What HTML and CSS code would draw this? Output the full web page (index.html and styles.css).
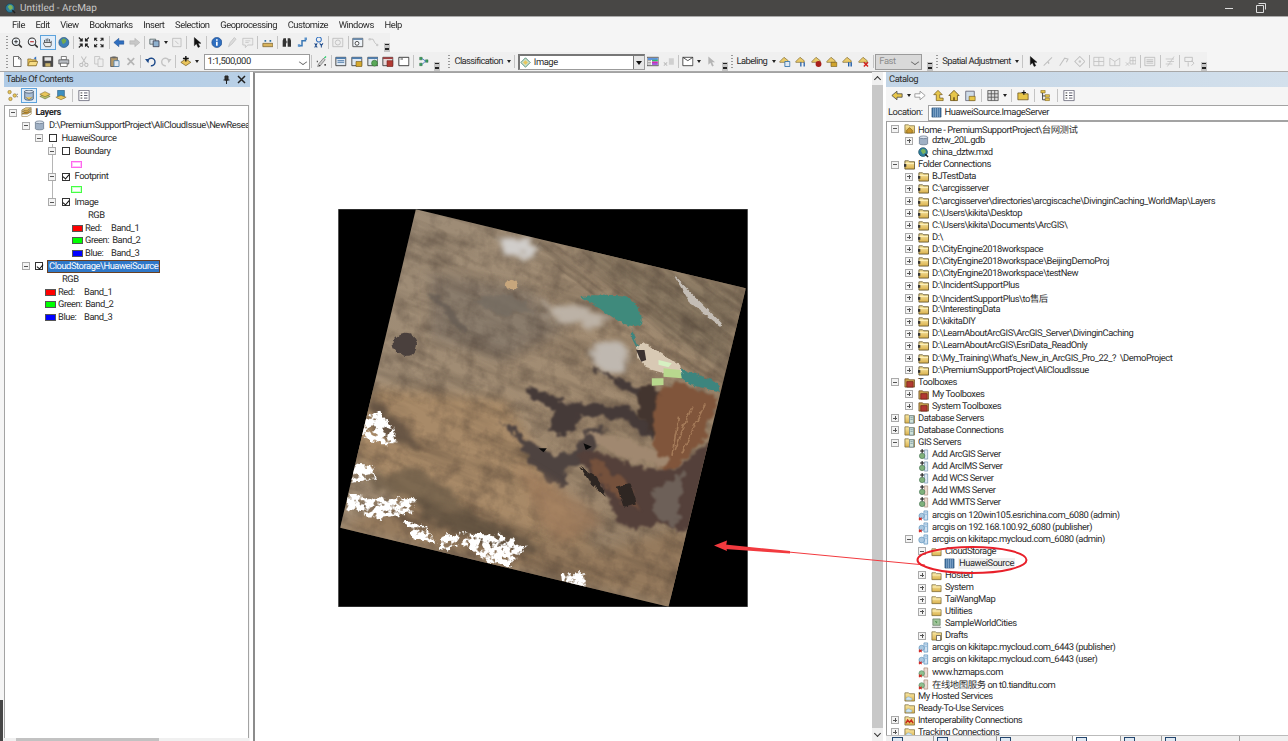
FILE: index.html
```html
<!DOCTYPE html>
<html lang="en">
<head>
    <meta charset="UTF-8">
    <meta name="viewport" content="width=device-width, initial-scale=1.0">
    <title>Untitled - ArcMap</title>
    <link rel="stylesheet" href="styles.css">
</head>
<body>

<!-- shared icons -->
<svg class="defs" width="0" height="0">
    <defs>
        <linearGradient id="folderFill" x1="0" y1="0" x2="0" y2="1"><stop offset="0" stop-color="#fbeaa6"/><stop offset="1" stop-color="#d9b04c"/></linearGradient>
        <symbol id="folder" viewBox="0 0 12 12"><path d="M1 3h4l1 1h5v6.5H1z" fill="url(#folderFill)" stroke="#7a6a3a" stroke-width=".8"/><path d="M1.500 5.500h9" stroke="#fff6c8" stroke-width=".8"/></symbol>
        <symbol id="folderconn" viewBox="0 0 12 12"><path d="M1 2h4l1 1h5.500v8H1z" fill="url(#folderFill)" stroke="#5c4f26" stroke-width=".9"/><path d="M1.500 5h9.500" stroke="#fff6c8" stroke-width=".9"/><path d="M0 5.500h2.500v3H0z" fill="#333"/></symbol>
        <symbol id="home" viewBox="0 0 12 12"><path d="M1 2h4l1 1h5.500v8H1z" fill="url(#folderFill)" stroke="#7a6a3a" stroke-width=".8"/><path d="M3 8l3-3 3 3v3H3z" fill="#c9972e" stroke="#6d4f10" stroke-width=".6"/></symbol>
        <symbol id="cloudfolder" viewBox="0 0 12 12"><path d="M1 2h4l1 1h5.500v8H1z" fill="url(#folderFill)" stroke="#7a6a3a" stroke-width=".8"/><path d="M3 10c-1.500 0-1.500-2.500 0-2.500.5-1.500 3.500-1.500 4 0 2-.3 2.500 2.500.5 2.500z" fill="#cfe6f5" stroke="#6c97b8" stroke-width=".5"/></symbol>
        <symbol id="interop" viewBox="0 0 12 12"><path d="M1 2h4l1 1h5.500v8H1z" fill="url(#folderFill)" stroke="#7a6a3a" stroke-width=".8"/><path d="M2 9l2-3.500L6 8l2-2.500L10 9" fill="none" stroke="#c8281e" stroke-width="1.500"/></symbol>
        <symbol id="toolbox" viewBox="0 0 12 12"><path d="M1 2h4l1 1h5.500v8H1z" fill="#c9a24e" stroke="#6a4a20" stroke-width=".8"/><path d="M3 5h7v6H3z" fill="#b23a32" stroke="#6c1c18" stroke-width=".7"/></symbol>
        <symbol id="dbfolder" viewBox="0 0 12 12"><path d="M1 2h4l1 1h5.500v8H1z" fill="url(#folderFill)" stroke="#7a6a3a" stroke-width=".8"/><path d="M6 3h4.500v8H6z" fill="#cfe1d6" stroke="#58798f" stroke-width=".7"/><path d="M7 5h2.500M7 7h2.500" stroke="#58798f" stroke-width=".6"/></symbol>
        <symbol id="gdb" viewBox="0 0 12 12"><path d="M1.500 2.500v7c0 1.600 9 1.600 9 0v-7z" fill="#9fb0c4" stroke="#56677c" stroke-width=".7"/><ellipse cx="6" cy="2.500" rx="4.500" ry="1.500" fill="#dce4ee" stroke="#56677c" stroke-width=".7"/></symbol>
        <symbol id="mxd" viewBox="0 0 12 12"><circle cx="5.500" cy="5.500" r="4.800" fill="#2f7f9c" stroke="#17465c" stroke-width=".7"/><path d="M3 4l2-2 3 1 .5 3-3 2z" fill="#7db45c"/><path d="M8 8l3 3" stroke="#222" stroke-width="1.500"/></symbol>
        <symbol id="srvadd" viewBox="0 0 12 12"><path d="M7 1h3.500v10H7z" fill="#dbe6f2" stroke="#6b8aa8" stroke-width=".7"/><circle cx="4.500" cy="7.500" r="3" fill="#7fb07a" stroke="#3d6b4d" stroke-width=".6"/><path d="M4.500 0v4.500M2.300 2.200h4.400" stroke="#111" stroke-width="1.100"/></symbol>
        <symbol id="srvaddw" viewBox="0 0 12 12"><path d="M7 1h3.500v10H7z" fill="#ecd9cc" stroke="#a88a78" stroke-width=".7"/><circle cx="4.500" cy="7.500" r="3" fill="#7fb07a" stroke="#3d6b4d" stroke-width=".6"/><path d="M4.500 0v4.500M2.300 2.200h4.400" stroke="#111" stroke-width="1.100"/></symbol>
        <symbol id="srvbad" viewBox="0 0 12 12"><path d="M6.500 1h4v10h-4z" fill="#cfe2f3" stroke="#4d87b5" stroke-width=".7"/><path d="M8 3h1.500M8 5h1.500" stroke="#4d87b5" stroke-width=".6"/><circle cx="4" cy="6.500" r="3" fill="#a9c7df" stroke="#4d87b5" stroke-width=".6"/><path d="M1 8.500l3 2.500M4 8.500l-3 2.500" stroke="#d2201a" stroke-width="1.200"/></symbol>
        <symbol id="srvok" viewBox="0 0 12 12"><path d="M6.500 1h4v10h-4z" fill="#cfe2f3" stroke="#4d87b5" stroke-width=".7"/><path d="M8 3h1.500M8 5h1.500" stroke="#4d87b5" stroke-width=".6"/><circle cx="4" cy="6.500" r="3.200" fill="#a9c7df" stroke="#4d87b5" stroke-width=".6"/></symbol>
        <symbol id="srvweb" viewBox="0 0 12 12"><path d="M6.500 1h4v10h-4z" fill="#eadbd2" stroke="#a5806c" stroke-width=".7"/><circle cx="4" cy="7" r="3" fill="#8fc08f" stroke="#4f7f5f" stroke-width=".6"/><path d="M1 8.500l3 2.500M4 8.500l-3 2.500" stroke="#d2201a" stroke-width="1.200"/></symbol>
        <symbol id="raster" viewBox="0 0 12 12"><path d="M1 1h10v10H1z" fill="#3f6f9e" stroke="#234a70" stroke-width=".6"/><path d="M3 1v10M5 1v10M7 1v10M9 1v10" stroke="#a9c7e4" stroke-width=".7"/></symbol>
        <symbol id="mapsvc" viewBox="0 0 12 12"><path d="M2 1h8v7H2z" fill="#9fc49a" stroke="#5a6f5a" stroke-width=".7"/><path d="M1 9.500h10V11H1z" fill="#9a9a9a"/><path d="M4 3l3 1-1 2z" fill="#4f8f4f"/></symbol>
        <symbol id="drafts" viewBox="0 0 12 12"><path d="M1 2h4l1 1h5.500v8H1z" fill="url(#folderFill)" stroke="#7a6a3a" stroke-width=".8"/><path d="M6 6h4.500v5.500H6z" fill="#fff" stroke="#333" stroke-width=".7"/></symbol>
        <symbol id="zoomin" viewBox="0 0 14 14"><circle cx="6" cy="6" r="4.500" fill="#eef3f8" stroke="#333" stroke-width="1.200"/><path d="M3.800 6h4.400M6 3.800v4.400" stroke="#222"/><path d="M9.500 9.500l3.500 3.500" stroke="#333" stroke-width="2"/></symbol>
        <symbol id="zoomout" viewBox="0 0 14 14"><circle cx="6" cy="6" r="4.500" fill="#eef3f8" stroke="#333" stroke-width="1.200"/><path d="M3.800 6h4.400" stroke="#a11" stroke-width="1.200"/><path d="M9.500 9.500l3.500 3.500" stroke="#333" stroke-width="2"/></symbol>
        <symbol id="hand" viewBox="0 0 14 14"><path d="M3 7V4M5 6V2.500M7 6V2M9 6V3M11 7V5M3 7c-2 0-1 2 1 5h6c1.500-1.500 1-3 1-5z" fill="#eee" stroke="#333" stroke-width=".9"/></symbol>
        <symbol id="globe" viewBox="0 0 14 14"><circle cx="7" cy="7" r="6" fill="#3d7fb8" stroke="#24527c" stroke-width=".8"/><path d="M4 4l3-2 3 2-1 3-3 2-1-2z" fill="#74a94d"/></symbol>
        <symbol id="fixedin" viewBox="0 0 14 14"><path d="M1 1l4 4M5 2v3H2M13 1L9 5M9 2v3h3M1 13l4-4M5 12V9H2M13 13L9 9M9 12V9h3" fill="none" stroke="#222" stroke-width="1.400"/></symbol>
        <symbol id="fixedout" viewBox="0 0 14 14"><path d="M5 5L2 2M2 5V2h3M9 5l3-3M12 5V2H9M5 9l-3 3M2 9v3h3M9 9l3 3M12 9v3H9" fill="none" stroke="#222" stroke-width="1.300"/></symbol>
        <symbol id="back" viewBox="0 0 14 14"><path d="M1 7l6-5v3h6v4H7v3z" fill="#2f6fc0" stroke="#1d4a8a" stroke-width=".6"/></symbol>
        <symbol id="fwd" viewBox="0 0 14 14"><path d="M13 7L7 2v3H1v4h6v3z" fill="#c8c8c8" stroke="#aaa" stroke-width=".6"/></symbol>
        <symbol id="layers" viewBox="0 0 14 14"><path d="M1 3h7v6H1z" fill="#d4dde8" stroke="#455" stroke-width=".9"/><path d="M5 5h7v7H5z" fill="#8fb1cf" stroke="#334" stroke-width=".9"/></symbol>
        <symbol id="dim" viewBox="0 0 14 14"><path d="M2 2h10v10H2z" fill="#eee" stroke="#bbb"/><path d="M5 5l4 4" stroke="#bbb"/></symbol>
        <symbol id="arrow" viewBox="0 0 14 14"><path d="M4 1v10l2.500-2.500L8.500 13l2-1-2-4H12z" fill="#111" stroke="#111" stroke-width=".5"/></symbol>
        <symbol id="arrowdim" viewBox="0 0 14 14"><path d="M4 1v10l2.500-2.500L8.500 13l2-1-2-4H12z" fill="#b5b5b5"/></symbol>
        <symbol id="info" viewBox="0 0 14 14"><circle cx="7" cy="7" r="6" fill="#2f6fc0" stroke="#1d4a8a" stroke-width=".8"/><path d="M6 6h2v5H6zM6 3h2v2H6z" fill="#fff"/></symbol>
        <symbol id="pen" viewBox="0 0 14 14"><path d="M3 12l2-5 5-6 2 2-5 6z" fill="#dcdcdc" stroke="#c4c4c4"/></symbol>
        <symbol id="note" viewBox="0 0 14 14"><path d="M1 2h12v8H7l-3 3v-3H1z" fill="#eee" stroke="#c0c0c0"/><path d="M4 5h6M4 7h4" stroke="#c8c8c8"/></symbol>
        <symbol id="ruler" viewBox="0 0 14 14"><path d="M1 8h12v4H1z" fill="#d9b35c" stroke="#6e5a2a" stroke-width=".8"/><path d="M3 4h2v2H3zM9 4h2v2H9z" fill="#2f6fa0"/></symbol>
        <symbol id="binoc" viewBox="0 0 14 14"><path d="M2 12V5l1-3h3v10zM12 12V5l-1-3H8v10z" fill="#333"/><path d="M6 5h2v3H6z" fill="#777"/></symbol>
        <symbol id="route" viewBox="0 0 14 14"><path d="M2 11h4V5h5" fill="none" stroke="#3a78b5" stroke-width="1.800"/><path d="M9 1h3v3H9zM1 9h3v3H1z" fill="#5d93c9"/></symbol>
        <symbol id="xy" viewBox="0 0 14 14"><circle cx="7" cy="3.500" r="3" fill="none" stroke="#2f6fc0" stroke-width="1.200"/><path d="M2 8l3 5M5 8l-3 5M8 8l2 2.500 2-2.500M10 10.500V13" fill="none" stroke="#1d4a8a" stroke-width="1.200"/></symbol>
        <symbol id="clock" viewBox="0 0 14 14"><path d="M1 2h12v10H1z" fill="#eee" stroke="#bbb"/><circle cx="7" cy="7" r="3" fill="none" stroke="#bbb"/></symbol>
        <symbol id="magwin" viewBox="0 0 14 14"><path d="M1 2h12v10H1z" fill="#eef3f8" stroke="#444"/><path d="M1 2h12v2H1z" fill="#6d8eb0"/><circle cx="6" cy="8" r="2.300" fill="#fff" stroke="#333"/></symbol>
        <symbol id="nodes" viewBox="0 0 14 14"><path d="M2 3h4l2 4 3 3" fill="none" stroke="#bbb"/><circle cx="2" cy="3" r="1.500" fill="#ccc"/><circle cx="11" cy="10" r="1.500" fill="#ccc"/></symbol>
        <symbol id="new" viewBox="0 0 14 14"><path d="M3 1h6l3 3v9H3z" fill="#fff" stroke="#444" stroke-width=".9"/><path d="M9 1v3h3" fill="none" stroke="#444" stroke-width=".8"/></symbol>
        <symbol id="open" viewBox="0 0 14 14"><path d="M1 4h4l1 1h5v7H1z" fill="#e9c45c" stroke="#7a5f1e" stroke-width=".8"/><path d="M1 12l2-5h10l-2 5z" fill="#f6dc84" stroke="#7a5f1e" stroke-width=".8"/><path d="M8 3l3-2v4z" fill="#2f6fc0"/></symbol>
        <symbol id="save" viewBox="0 0 14 14"><path d="M1 1h12v12H1z" fill="#4a4a4a" stroke="#222" stroke-width=".6"/><path d="M3 2h8v4H3z" fill="#e8e8e8"/><path d="M4 9h6v4H4z" fill="#c9b36a"/></symbol>
        <symbol id="print" viewBox="0 0 14 14"><path d="M4 1h6v4H4z" fill="#fff" stroke="#444" stroke-width=".8"/><path d="M1 5h12v5H1z" fill="#b8bcc2" stroke="#444" stroke-width=".8"/><path d="M3 9h8v4H3z" fill="#fff" stroke="#444" stroke-width=".8"/></symbol>
        <symbol id="cut" viewBox="0 0 14 14"><path d="M4 1l5 8M10 1L5 9" stroke="#c0c0c0" stroke-width="1.200"/><circle cx="4" cy="11" r="2" fill="none" stroke="#bbb" stroke-width="1.200"/><circle cx="10" cy="11" r="2" fill="none" stroke="#bbb" stroke-width="1.200"/></symbol>
        <symbol id="copy" viewBox="0 0 14 14"><path d="M2 1h6v9H2z" fill="#eee" stroke="#c0c0c0"/><path d="M6 4h6v9H6z" fill="#eee" stroke="#c0c0c0"/></symbol>
        <symbol id="paste" viewBox="0 0 14 14"><path d="M2 2h8v11H2z" fill="#b59a6a" stroke="#555"/><path d="M4 1h4v2H4z" fill="#666"/><path d="M6 6h6v7H6z" fill="#dfe9f3" stroke="#4d7faa"/></symbol>
        <symbol id="del" viewBox="0 0 14 14"><path d="M3 3l8 8M11 3l-8 8" stroke="#b5b5b5" stroke-width="2"/></symbol>
        <symbol id="undo" viewBox="0 0 14 14"><path d="M3 7a4.500 4.500 0 1 1 4 5" fill="none" stroke="#1d4a8a" stroke-width="1.700"/><path d="M0 4l5 0-1 5z" fill="#1d4a8a"/></symbol>
        <symbol id="redo" viewBox="0 0 14 14"><path d="M11 7a4.500 4.500 0 1 0-4 5" fill="none" stroke="#c4c4c4" stroke-width="1.700"/><path d="M14 4H9l1 5z" fill="#c4c4c4"/></symbol>
        <symbol id="adddata" viewBox="0 0 14 14"><path d="M1 8l6-4 6 4-6 4z" fill="#e9c45c" stroke="#6d541a" stroke-width=".8"/><path d="M7 0v7M3.500 3.500h7" stroke="#111" stroke-width="1.700"/></symbol>
        <symbol id="editor" viewBox="0 0 14 14"><path d="M2 13l1-3 6-7 2 2-6 7z" fill="#ccc" stroke="#444" stroke-width=".6"/><path d="M1 7h1M4 12h1M10 11h2" stroke="#111" stroke-width="1.500"/><path d="M10 3l2-2" stroke="#2c6" stroke-width="1.500"/></symbol>
        <symbol id="window" viewBox="0 0 14 14"><path d="M1 2h12v10H1z" fill="#dfe9f3" stroke="#333"/><path d="M1 2h12v2H1z" fill="#4f7fb0"/><path d="M3 6h8M3 8h8" stroke="#3f6fa0"/></symbol>
        <symbol id="winyellow" viewBox="0 0 14 14"><path d="M1 2h12v10H1z" fill="#dfe9f3" stroke="#333"/><path d="M1 2h12v2H1z" fill="#4f7fb0"/><path d="M6 7h7v6H6z" fill="#d6a92e" stroke="#6d541a" stroke-width=".7"/></symbol>
        <symbol id="wingreen" viewBox="0 0 14 14"><path d="M1 2h12v10H1z" fill="#dfe9f3" stroke="#333"/><path d="M1 2h12v2H1z" fill="#4f7fb0"/><circle cx="9" cy="9" r="3.500" fill="#5aa85a" stroke="#2b6b2b" stroke-width=".7"/></symbol>
        <symbol id="winred" viewBox="0 0 14 14"><path d="M1 2h12v10H1z" fill="#e8d8d8" stroke="#333"/><path d="M1 2h12v2H1z" fill="#a04040"/><path d="M6 6h7v7H6z" fill="#b23a32" stroke="#6c1c18" stroke-width=".7"/></symbol>
        <symbol id="winblank" viewBox="0 0 14 14"><path d="M1 2h12v10H1z" fill="#fff" stroke="#222"/><path d="M3 4h3" stroke="#222"/></symbol>
        <symbol id="model" viewBox="0 0 14 14"><path d="M2 2h3v3H2zM9 5h3v3H9zM2 9h3v3H2z" fill="#3f9f5f" stroke="#1d5c33" stroke-width=".5"/><path d="M5 3.500l4 3-4 4" fill="none" stroke="#2f6fc0"/></symbol>
        <symbol id="color" viewBox="0 0 14 14"><path d="M0 2h14v10H0z" fill="#fff" stroke="#444"/><path d="M1 3h12v2H1z" fill="#2c6fd0"/><path d="M6 5h7v2H6z" fill="#2cc06f"/><path d="M6 7h7v2H6z" fill="#d02cb0"/><path d="M6 9h7v2H6z" fill="#8a2cd0"/><path d="M1 6h4M1 8h4M1 10h4" stroke="#888"/></symbol>
        <symbol id="dimx" viewBox="0 0 14 14"><path d="M7 3h6v8H7z" fill="#d0d0d0"/><path d="M1 8l4 4M5 8l-4 4" stroke="#c0c0c0" stroke-width="1.300"/></symbol>
        <symbol id="frame" viewBox="0 0 14 14"><path d="M1 2h12v10H1z" fill="#fff" stroke="#333"/><path d="M1 2l6 4 6-4" fill="none" stroke="#333"/></symbol>
        <symbol id="diamond" viewBox="0 0 14 14"><path d="M7 1l6 6-6 6-6-6z" fill="#cfe0c8" stroke="#3d7f6d"/><path d="M4 7l3-3 3 3-3 3z" fill="#e8c65a"/></symbol>
        <symbol id="label" viewBox="0 0 14 14"><path d="M1 7l5-5 5 4v2H1z" fill="#eacb6a" stroke="#6d541a" stroke-width=".7"/><path d="M7 7h6v6H7z" fill="#dfe9f3" stroke="#2f6fa8"/></symbol>
        <symbol id="labelarrows" viewBox="0 0 14 14"><path d="M1 7l5-5 5 4v2H1z" fill="#eacb6a" stroke="#6d541a" stroke-width=".7"/><path d="M7 13V8M11 8v5" stroke="#1d5ca8" stroke-width="1.500"/></symbol>
        <symbol id="labelred" viewBox="0 0 14 14"><path d="M1 7l5-5 5 4v2H1z" fill="#eacb6a" stroke="#6d541a" stroke-width=".7"/><circle cx="9" cy="10" r="3.500" fill="#a8201c"/></symbol>
        <symbol id="labellock" viewBox="0 0 14 14"><path d="M1 7l5-5 5 4v2H1z" fill="#eacb6a" stroke="#6d541a" stroke-width=".7"/><path d="M6 8h7v5H6z" fill="#d1a42c" stroke="#6d541a" stroke-width=".7"/></symbol>
        <symbol id="labelpause" viewBox="0 0 14 14"><path d="M1 7l5-5 5 4v2H1z" fill="#eacb6a" stroke="#6d541a" stroke-width=".7"/><path d="M8 8v5M11 8v5" stroke="#1d5ca8" stroke-width="1.700"/></symbol>
        <symbol id="labelx" viewBox="0 0 14 14"><path d="M1 7l5-5 5 4v2H1z" fill="#eacb6a" stroke="#6d541a" stroke-width=".7"/><path d="M7 8l5 5M12 8l-5 5" stroke="#d2201a" stroke-width="1.700"/></symbol>
        <symbol id="sa1" viewBox="0 0 14 14"><path d="M2 12L12 2M6 8h2v2" fill="none" stroke="#c0c0c0" stroke-width="1.200"/></symbol>
        <symbol id="sa2" viewBox="0 0 14 14"><path d="M2 12l6-9 4 1-2 4" fill="none" stroke="#c0c0c0" stroke-width="1.200"/></symbol>
        <symbol id="sa3" viewBox="0 0 14 14"><path d="M7 1l6 6-6 6-6-6z" fill="none" stroke="#c0c0c0" stroke-width="1.200"/><circle cx="7" cy="7" r="1.500" fill="#c8c8c8"/></symbol>
        <symbol id="sa4" viewBox="0 0 14 14"><path d="M1 2h12v10H1zM7 2v10M1 7h12" fill="none" stroke="#c0c0c0"/></symbol>
        <symbol id="sa5" viewBox="0 0 14 14"><path d="M1 3l6 4 6-4v9H1z" fill="none" stroke="#c0c0c0"/><path d="M7 7v5" stroke="#c0c0c0"/></symbol>
        <symbol id="sa6" viewBox="0 0 14 14"><path d="M6 2h7v8H6zM9.500 2v8M6 6h7" fill="none" stroke="#c0c0c0"/><path d="M1 8l4 4M5 8l-4 4" stroke="#c0c0c0"/></symbol>
        <symbol id="sa7" viewBox="0 0 14 14"><path d="M1 2h12v10H1z" fill="#eee" stroke="#bbb"/><path d="M3 5h8M3 7h8M3 9h8" stroke="#bbb"/></symbol>
        <symbol id="sa8" viewBox="0 0 14 14"><path d="M2 4h10M4 7h8M2 10h8M12 1l-8 12" stroke="#c4c4c4"/></symbol>
        <symbol id="sa9" viewBox="0 0 14 14"><path d="M1 2h9v5H1z" fill="none" stroke="#bbb"/><path d="M9 6l3 3-3 3M5 8v5" fill="none" stroke="#bbb"/></symbol>
        <symbol id="tocdraw" viewBox="0 0 14 14"><circle cx="3" cy="3" r="2" fill="#e8c65a" stroke="#7a5f1e" stroke-width=".6"/><circle cx="9" cy="7" r="2" fill="#e8c65a" stroke="#7a5f1e" stroke-width=".6"/><circle cx="4" cy="11" r="2" fill="#e8c65a" stroke="#7a5f1e" stroke-width=".6"/><path d="M12 5v1M12 8v1" stroke="#333"/></symbol>
        <symbol id="tocsource" viewBox="0 0 14 14"><path d="M2 2v9c0 2 10 2 10 0V2z" fill="#a9bdd4" stroke="#445a72"/><ellipse cx="7" cy="2.500" rx="5" ry="1.800" fill="#dce4ee" stroke="#445a72"/><path d="M3 9l4 3 4-3" fill="#e8c65a" stroke="#7a5f1e" stroke-width=".6"/></symbol>
        <symbol id="tocstack" viewBox="0 0 14 14"><path d="M1 9l5-3h7l-5 3z" fill="#c9973a" stroke="#6d541a" stroke-width=".7"/><path d="M1 6.500l5-3h7l-5 3z" fill="#e8b85a" stroke="#6d541a" stroke-width=".7"/><path d="M1 4l5-3h7l-5 3z" fill="#f4d584" stroke="#6d541a" stroke-width=".7"/><path d="M1 4v8h7l5-3V1" fill="none" stroke="#8a6a26" stroke-width=".7"/></symbol>
        <symbol id="tocdisp" viewBox="0 0 14 14"><path d="M1 8l6-3 6 3-6 3z" fill="#b7c46c" stroke="#5a5a2a" stroke-width=".6"/><path d="M1 5.500l6-3 6 3-6 3z" fill="#e8c65a" stroke="#7a5f1e" stroke-width=".6"/></symbol>
        <symbol id="tocsel" viewBox="0 0 14 14"><path d="M3 1h8v9H3z" fill="#3d8fc0" stroke="#1d4a70" stroke-width=".6"/><path d="M1 9l6-2 6 2-6 3z" fill="#e8c65a" stroke="#7a5f1e" stroke-width=".6"/></symbol>
        <symbol id="toclist" viewBox="0 0 14 14"><path d="M1 1h12v12H1z" fill="#fff" stroke="#667"/><path d="M3 4h2M3 7h2M3 10h2" stroke="#222"/><path d="M7 4h4M7 7h4M7 10h4" stroke="#445"/></symbol>
        <symbol id="catback" viewBox="0 0 14 14"><path d="M1 7l6-5v3h6v4H7v3z" fill="#e7c64a" stroke="#444" stroke-width=".9"/></symbol>
        <symbol id="catfwd" viewBox="0 0 14 14"><path d="M13 7L7 2v3H1v4h6v3z" fill="#fff" stroke="#888" stroke-width=".9"/></symbol>
        <symbol id="catup" viewBox="0 0 14 14"><path d="M7 1l5 5H9v4h4v3H5V6H2z" fill="#e7c64a" stroke="#6d541a" stroke-width=".8"/></symbol>
        <symbol id="cathome" viewBox="0 0 14 14"><path d="M7 1l6 6h-2v6H3V7H1z" fill="#e7c64a" stroke="#5c4512" stroke-width=".9"/><path d="M6 9h2v4H6z" fill="#7a5f1e"/></symbol>
        <symbol id="catconn" viewBox="0 0 14 14"><path d="M2 2h10v11H2z" fill="#cfdce8" stroke="#667" /><path d="M6 8h7v5H6z" fill="#e7c64a" stroke="#6d541a" stroke-width=".7"/></symbol>
        <symbol id="catgrid" viewBox="0 0 14 14"><path d="M1 1h12v12H1z" fill="#ddd" stroke="#555"/><path d="M1 5h12M1 9h12M5 1v12M9 1v12" stroke="#555"/></symbol>
        <symbol id="catnew" viewBox="0 0 14 14"><path d="M1 4h5l1 1h6v7H1z" fill="#e7c64a" stroke="#5c4512" stroke-width=".8"/><path d="M8 1v5M5.500 3.500h5" stroke="#111" stroke-width="1.200"/></symbol>
        <symbol id="cattree" viewBox="0 0 14 14"><path d="M1 1h5v3H1zM6 6h5v3H6zM6 10h5v3H6z" fill="#e7c64a" stroke="#6d541a" stroke-width=".6"/><path d="M3 4v8h3M3 7.500h3" fill="none" stroke="#333"/></symbol>
    </defs>
</svg>

<div class="app">

    <header class="titlebar">
        <svg class="ic"><use href="#mxd"/></svg>
        <span>Untitled - ArcMap</span>
        <div class="winbtns">
            <svg width="12" height="12" viewBox="0 0 12 12"><path d="M2 6.500h8" stroke="#ddd"/></svg>
            <svg width="12" height="12" viewBox="0 0 12 12"><path d="M3.500 1.500h7v6M1.500 3.500h7v7h-7z" fill="none" stroke="#ddd"/></svg>
        </div>
    </header>

    <nav class="menubar">
        <a>File</a><a>Edit</a><a>View</a><a>Bookmarks</a><a>Insert</a><a>Selection</a><a>Geoprocessing</a><a>Customize</a><a>Windows</a><a>Help</a>
    </nav>

    <div class="toolrow">
        <div class="toolbar">
            <i class="grip"></i>
            <svg class="tb"><use href="#zoomin"/></svg>
            <svg class="tb"><use href="#zoomout"/></svg>
            <svg class="tb active"><use href="#hand"/></svg>
            <svg class="tb"><use href="#globe"/></svg>
            <i class="sep"></i>
            <svg class="tb"><use href="#fixedin"/></svg>
            <svg class="tb"><use href="#fixedout"/></svg>
            <i class="sep"></i>
            <svg class="tb"><use href="#back"/></svg>
            <svg class="tb"><use href="#fwd"/></svg>
            <i class="sep"></i>
            <svg class="tb"><use href="#layers"/></svg>
            <i class="caret"></i>
            <svg class="tb"><use href="#dim"/></svg>
            <i class="sep"></i>
            <svg class="tb"><use href="#arrow"/></svg>
            <i class="sep"></i>
            <svg class="tb"><use href="#info"/></svg>
            <svg class="tb"><use href="#pen"/></svg>
            <svg class="tb"><use href="#note"/></svg>
            <i class="sep"></i>
            <svg class="tb"><use href="#ruler"/></svg>
            <i class="sep"></i>
            <svg class="tb"><use href="#binoc"/></svg>
            <svg class="tb"><use href="#route"/></svg>
            <svg class="tb"><use href="#xy"/></svg>
            <i class="sep"></i>
            <svg class="tb"><use href="#clock"/></svg>
            <i class="sep"></i>
            <svg class="tb"><use href="#magwin"/></svg>
            <svg class="tb"><use href="#nodes"/></svg>
            <i class="overflow"></i>
        </div>
    </div>

    <div class="toolrow">
        <div class="toolbar standard">
            <i class="grip"></i>
            <svg class="tb"><use href="#new"/></svg>
            <svg class="tb"><use href="#open"/></svg>
            <svg class="tb"><use href="#save"/></svg>
            <svg class="tb"><use href="#print"/></svg>
            <i class="sep"></i>
            <svg class="tb"><use href="#cut"/></svg>
            <svg class="tb"><use href="#copy"/></svg>
            <svg class="tb"><use href="#paste"/></svg>
            <svg class="tb"><use href="#del"/></svg>
            <i class="sep"></i>
            <svg class="tb"><use href="#undo"/></svg>
            <svg class="tb"><use href="#redo"/></svg>
            <i class="sep"></i>
            <svg class="tb"><use href="#adddata"/></svg>
            <i class="caret"></i>
            <div class="combo scale"><span>1:1,500,000</span><b class="chev"></b></div>
            <i class="sep"></i>
            <svg class="tb"><use href="#editor"/></svg>
            <i class="sep"></i>
            <svg class="tb"><use href="#window"/></svg>
            <svg class="tb"><use href="#winyellow"/></svg>
            <svg class="tb"><use href="#wingreen"/></svg>
            <svg class="tb"><use href="#winred"/></svg>
            <svg class="tb"><use href="#winblank"/></svg>
            <i class="sep"></i>
            <svg class="tb"><use href="#model"/></svg>
            <i class="overflow"></i>
        </div>
        <div class="toolbar">
            <i class="grip"></i>
            <span class="tbtext">Classification</span>
            <i class="caret"></i>
            <i class="sep"></i>
            <div class="combo image">
                <svg class="ic"><use href="#diamond"/></svg>
                <span>Image</span>
                <b class="dropbtn"></b>
            </div>
            <svg class="tb"><use href="#color"/></svg>
            <svg class="tb"><use href="#dimx"/></svg>
            <i class="sep"></i>
            <svg class="tb"><use href="#frame"/></svg>
            <i class="caret"></i>
            <svg class="tb"><use href="#arrowdim"/></svg>
            <i class="overflow"></i>
        </div>
        <div class="toolbar">
            <i class="grip"></i>
            <span class="tbtext">Labeling</span>
            <i class="caret"></i>
            <svg class="tb"><use href="#label"/></svg>
            <svg class="tb"><use href="#labelarrows"/></svg>
            <svg class="tb"><use href="#labelred"/></svg>
            <svg class="tb"><use href="#labellock"/></svg>
            <svg class="tb"><use href="#labelpause"/></svg>
            <svg class="tb"><use href="#labelx"/></svg>
            <i class="sep"></i>
            <div class="combo fast"><span>Fast</span><b class="chev"></b></div>
            <i class="overflow"></i>
        </div>
        <div class="toolbar">
            <i class="grip"></i>
            <span class="tbtext">Spatial Adjustment</span>
            <i class="caret"></i>
            <i class="sep"></i>
            <svg class="tb"><use href="#arrow"/></svg>
            <svg class="tb"><use href="#sa1"/></svg>
            <svg class="tb"><use href="#sa2"/></svg>
            <svg class="tb"><use href="#sa3"/></svg>
            <i class="sep"></i>
            <svg class="tb"><use href="#sa4"/></svg>
            <svg class="tb"><use href="#sa5"/></svg>
            <svg class="tb"><use href="#sa6"/></svg>
            <i class="sep"></i>
            <svg class="tb"><use href="#sa7"/></svg>
            <i class="sep"></i>
            <svg class="tb"><use href="#sa8"/></svg>
            <i class="sep"></i>
            <svg class="tb"><use href="#sa9"/></svg>
            <i class="overflow"></i>
        </div>
    </div>

    <main class="workspace">

        <aside class="toc">
            <div class="panelhead toc-head">
                <span>Table Of Contents</span>
                <div class="panelbtns">
                    <svg width="9" height="9" viewBox="0 0 9 9"><path d="M3 1h3v4H3zM1.500 5h6M4.500 5v4" fill="#333" stroke="#222"/></svg>
                    <svg width="9" height="9" viewBox="0 0 9 9"><path d="M1 1l7 7M8 1L1 8" stroke="#222" stroke-width="1.500"/></svg>
                </div>
            </div>
            <div class="paneltools">
                <svg class="tb"><use href="#tocdraw"/></svg>
                <svg class="tb active"><use href="#tocsource"/></svg>
                <svg class="tb"><use href="#tocdisp"/></svg>
                <svg class="tb"><use href="#tocsel"/></svg>
                <i class="sep"></i>
                <svg class="tb"><use href="#toclist"/></svg>
            </div>
            <div class="toc-tree">
                <div class="row"><i class="exp minus"></i><svg class="ic"><use href="#tocstack"/></svg><b>Layers</b></div>
                <div class="row d1"><i class="exp minus"></i><svg class="ic"><use href="#gdb"/></svg><span>D:\PremiumSupportProject\AliCloudIssue\NewResea</span></div>
                <div class="row d2"><i class="exp minus"></i><i class="check"></i><span>HuaweiSource</span></div>
                <div class="row d3 branch"><i class="exp minus"></i><i class="check"></i><span>Boundary</span></div>
                <div class="row d3 branch"><i class="exp"></i><i class="check-gap"></i><i class="swatch outline-pink"></i></div>
                <div class="row d3 branch"><i class="exp minus"></i><i class="check on"></i><span>Footprint</span></div>
                <div class="row d3 branch"><i class="exp"></i><i class="check-gap"></i><i class="swatch outline-green"></i></div>
                <div class="row d3 branch last"><i class="exp minus"></i><i class="check on"></i><span>Image</span></div>
                <div class="row band-head d3"><span>RGB</span></div>
                <div class="row band d3"><i class="swatch red"></i><span class="bandname">Red:</span><span>Band_1</span></div>
                <div class="row band d3"><i class="swatch green"></i><span class="bandname">Green:</span><span>Band_2</span></div>
                <div class="row band d3"><i class="swatch blue"></i><span class="bandname">Blue:</span><span>Band_3</span></div>
                <div class="row d1 cloud"><i class="exp minus"></i><i class="check on"></i><span class="selected">CloudStorage\HuaweiSource</span></div>
                <div class="row band-head d2"><span>RGB</span></div>
                <div class="row band d2"><i class="swatch red"></i><span class="bandname">Red:</span><span>Band_1</span></div>
                <div class="row band d2"><i class="swatch green"></i><span class="bandname">Green:</span><span>Band_2</span></div>
                <div class="row band d2"><i class="swatch blue"></i><span class="bandname">Blue:</span><span>Band_3</span></div>
            </div>
            <div class="hscroll"><i></i></div>
        </aside>

        <section class="map">
            <!-- viewBox is in 3x crop units so shapes were easier to trace -->
            <svg class="scene" viewBox="24 27 1229 1194">
                <defs>
                    <clipPath id="tile"><polygon points="257,28 1247,265 1015,1220 30,983"/></clipPath>
                    <linearGradient id="land" x1="0" y1="0" x2="1" y2="1">
                        <stop offset="0" stop-color="#9c8c78"/>
                        <stop offset=".5" stop-color="#a28c72"/>
                        <stop offset="1" stop-color="#937d64"/>
                    </linearGradient>
                    <filter id="softer"><feGaussianBlur stdDeviation="16"/></filter>
                    <filter id="streak" x="0" y="0" width="100%" height="100%" color-interpolation-filters="sRGB">
                        <feTurbulence type="fractalNoise" baseFrequency=".004 .025" numOctaves="4" seed="7"/>
                        <feColorMatrix values="0 0 0 0 .25  0 0 0 0 .2  0 0 0 0 .16  2.400 0 0 0 -1"/>
                        <feGaussianBlur stdDeviation="2"/>
                    </filter>
                    <filter id="streaklight" x="0" y="0" width="100%" height="100%" color-interpolation-filters="sRGB">
                        <feTurbulence type="fractalNoise" baseFrequency=".004 .05" numOctaves="3" seed="21"/>
                        <feColorMatrix values="0 0 0 0 .3  0 0 0 0 .25  0 0 0 0 .2  3 0 0 0 -1.250"/>
                        <feGaussianBlur stdDeviation="1.500"/>
                    </filter>
                    <filter id="grain" x="0" y="0" width="100%" height="100%" color-interpolation-filters="sRGB">
                        <feTurbulence type="fractalNoise" baseFrequency=".02" numOctaves="4" seed="3"/>
                        <feColorMatrix values="0 0 0 0 .25  0 0 0 0 .2  0 0 0 0 .17  2.400 0 0 0 -1"/>
                        <feGaussianBlur stdDeviation="1.500"/>
                    </filter>
                    <filter id="rough" x="-20%" y="-20%" width="140%" height="140%" color-interpolation-filters="sRGB">
                        <feTurbulence type="fractalNoise" baseFrequency=".035" numOctaves="4" seed="5" result="n"/>
                        <feDisplacementMap in="SourceGraphic" in2="n" scale="40" xChannelSelector="R" yChannelSelector="G"/>
                        <feGaussianBlur stdDeviation="3"/>
                    </filter>
                    <filter id="cloudy" x="-30%" y="-30%" width="160%" height="160%" color-interpolation-filters="sRGB">
                        <feTurbulence type="fractalNoise" baseFrequency=".02 .05" numOctaves="4" seed="9" result="n"/>
                        <feDisplacementMap in="SourceGraphic" in2="n" scale="60" xChannelSelector="R" yChannelSelector="G"/>
                        <feGaussianBlur stdDeviation="8"/>
                    </filter>
                    <filter id="fine" x="-10%" y="-10%" width="120%" height="120%" color-interpolation-filters="sRGB">
                        <feTurbulence type="fractalNoise" baseFrequency=".06" numOctaves="3" seed="13" result="n"/>
                        <feDisplacementMap in="SourceGraphic" in2="n" scale="14" xChannelSelector="R" yChannelSelector="G"/>
                        <feGaussianBlur stdDeviation="1.500"/>
                    </filter>
                    <filter id="snow" x="-30%" y="-30%" width="160%" height="160%" color-interpolation-filters="sRGB">
                        <feTurbulence type="fractalNoise" baseFrequency=".05" numOctaves="3" seed="11" result="n"/>
                        <feColorMatrix in="n" values="0 0 0 0 1  0 0 0 0 1  0 0 0 0 1  7 0 0 0 -2.400" result="m"/>
                        <feDisplacementMap in="SourceGraphic" in2="n" scale="28" xChannelSelector="R" yChannelSelector="G" result="d"/>
                        <feComposite in="d" in2="m" operator="in"/>
                        <feGaussianBlur stdDeviation="2"/>
                    </filter>
                </defs>
                <rect x="24" y="27" width="1229" height="1194" fill="#000"/>
                <g clip-path="url(#tile)">
                    <rect x="0" y="0" width="1300" height="1250" fill="url(#land)"/>
                    <path d="M130 560l400 40 200 350 60 100-300 40-280-200-150-130z" fill="#a88a68" filter="url(#softer)"/>
                    <path d="M30 980l200-90 300 80 300 80 200-60 120 60-130 160z" fill="#957a5d" filter="url(#softer)"/>
                    <path d="M700 120l550 150-60 240-180-100-150-150z" fill="#8d7c65" filter="url(#softer)"/>
                    <path d="M300 220l300 50 100 120-180 90-220-70z" fill="#8a7c6c" filter="url(#softer)"/>
                    <g transform="rotate(22 640 620)">
                        <rect x="-200" y="-200" width="1700" height="1650" filter="url(#streak)" opacity=".28"/>
                    </g>
                    <g transform="rotate(38 1000 300)">
                        <rect x="600" y="0" width="900" height="420" filter="url(#streaklight)" opacity=".3"/>
                    </g>
                    <rect x="0" y="0" width="1300" height="1250" filter="url(#grain)" opacity=".3"/>

                    <!-- pale flats -->
                    <path d="M505 105l90 10 35 25-25 30-60 5-40-40z" fill="#d0cdca" filter="url(#cloudy)"/>
                    <path d="M630 305l130 15 80 45-40 20-130-25z" fill="#bcb2a6" filter="url(#cloudy)"/>
                    <path d="M800 430l60 0 40 40-30 50-60-5-30-50z" fill="#bfb8b0" filter="url(#cloudy)"/>
                    <ellipse cx="545" cy="255" rx="18" ry="16" fill="#c7a67c" filter="url(#fine)"/>
                    <path d="M1030 225l55 55 90 90-5 8-90-70z" fill="#c4bdb5" filter="url(#fine)"/>

                    <!-- dark rock -->
                    <path d="M190 420c20-30 60-30 70 5 5 30-20 50-40 40-20-5-40-20-30-45z" fill="#4a403d" filter="url(#fine)"/>
                    <path d="M285 265l85 60 40 75-40-20-40-60z" fill="#675d54" filter="url(#rough)" opacity=".8"/>
                    <path d="M420 300l120-20 70 50-100 20z" fill="#776e63" filter="url(#rough)" opacity=".8"/>
                    <path d="M590 560l130 50 170 10 90 60-10 40-90-60-120-20-60 80-40-30 10-60-70-40z" fill="#453a38" filter="url(#rough)"/>
                    <path d="M505 655l95 70 70 40 60-10 40-70 60 0-60 100-70 20 20 50-40 0-60-40-60-100z" fill="#4e4340" filter="url(#rough)"/>
                    <path d="M780 500l120 50 70 40 20 60-90-70z" fill="#453a38" filter="url(#rough)"/>
                    <path d="M930 560l60 10 30 120-50 20-40-60z" fill="#43352f" filter="url(#rough)"/>

                    <!-- brown mountains -->
                    <path d="M985 570l60-25 120 50-40 110-80 90-40 30-30-60-5-100z" fill="#80553b" filter="url(#rough)"/>
                    <path d="M1045 650l-20 120M1085 620l-50 130M1125 610l-70 150" stroke="#a47a58" stroke-width="5" filter="url(#fine)"/>
                    <path d="M740 770l50-20 130 50 110 10 60-50 70-50-40 180-50 110-70-30-100 20-40-40-60-110z" fill="#54403a" filter="url(#rough)"/>
                    <path d="M780 770l60 40 60 50 30 70-60-30-80-80z" fill="#75513c" filter="url(#rough)"/>
                    <path d="M960 880l100-60-20 170-60-40z" fill="#6d6058" filter="url(#rough)"/>
                    <path d="M860 860l20 60 40-10-20-60zM750 800l30 50 50 40-30-60z" fill="#2e2622" filter="url(#fine)"/>
                    <path d="M770 695l110 20 100 40 40 30-20 15-100-20-100-50z" fill="#a08870" filter="url(#rough)"/>
                    <path d="M625 745l25 0-10 12zM760 730l25 10-18 10z" fill="#0a0a0a"/>

                    <!-- lower streaks -->
                    <path d="M130 590l60 60 60 60 20 40-90-20-60-70z" fill="#5e4e40" filter="url(#cloudy)" opacity=".8"/>
                    <path d="M90 830l170-30 110 80 40 60-150-30-120-40z" fill="#6c5c48" filter="url(#cloudy)" opacity=".7"/>
                    <path d="M250 890l190 60 150 70 40 40-160-20-200-90z" fill="#574a3b" filter="url(#cloudy)" opacity=".7"/>
                    <path d="M560 790l200 120 60 60-130 60-60-70z" fill="#a47f5e" filter="url(#softer)" opacity=".7"/>

                    <!-- water -->
                    <path d="M750 292c40-12 70-4 110-4 30 0 55 10 70 50 10 24 5 40-20 40-40-2-60-30-85-40-20-16-40-26-75-46z" fill="#3f8a7c" filter="url(#fine)"/>
                    <path d="M905 385l15 50 60 20 70 50 110 40 10 30-90-20-60-50-90-40-25-50z" fill="#3d857e" filter="url(#fine)"/>
                    <!-- salt pans -->
                    <path d="M920 440l20-15 60 40 50 30 5 25-55 0-50-15-25-30z" fill="#d8c9b4" filter="url(#fine)"/>
                    <path d="M918 450l25 0 5 30-15 5z" fill="#3c3230"/>
                    <path d="M1000 505l50 5 5 25-55-5zM965 535l35 0 0 20-35 2z" fill="#b8d88e"/>
                    <path d="M985 480l40 10-10 12-30-8z" fill="#d6f0c2"/>

                    <!-- snow -->
                    <g fill="#fff" filter="url(#snow)">
                        <path d="M100 650l50-15 40 45 10 50-70 0-40-25z"/>
                        <path d="M70 790l55 5 15 45-80 5z"/>
                        <path d="M50 880l90 15 120 0-15 45-100 15-100-35z"/>
                        <path d="M220 960l70 20 30 55-70-20z"/>
                        <path d="M330 1010l60-10-10 40-50 10z"/>
                        <path d="M400 1000l120 5 70 35-50 60-70-20-70-40z"/>
                        <path d="M695 1120l70 0 5 40-70 0z"/>
                    </g>
                </g>
                <path d="M24 27h1229v1194H24z" fill="none" stroke="#888" stroke-width="2"/>
            </svg>
        </section>

        <div class="vscroll">
            <b class="up"></b>
            <i></i>
            <b class="down"></b>
        </div>

        <aside class="catalog">
            <div class="panelhead cat-head"><span>Catalog</span></div>
            <div class="paneltools cat-tools">
                <svg class="tb"><use href="#catback"/></svg>
                <i class="caret"></i>
                <svg class="tb fwd"><use href="#catfwd"/></svg>
                <svg class="tb"><use href="#catup"/></svg>
                <svg class="tb"><use href="#cathome"/></svg>
                <svg class="tb"><use href="#catconn"/></svg>
                <i class="sep"></i>
                <svg class="tb"><use href="#catgrid"/></svg>
                <i class="caret"></i>
                <i class="sep"></i>
                <svg class="tb"><use href="#catnew"/></svg>
                <i class="sep"></i>
                <svg class="tb"><use href="#cattree"/></svg>
                <i class="sep"></i>
                <svg class="tb"><use href="#toclist"/></svg>
            </div>
            <div class="location">
                <span>Location:</span>
                <div class="locbox"><svg class="ic"><use href="#raster"/></svg><span>HuaweiSource.ImageServer</span></div>
            </div>
            <div class="cat-tree">
                <div class="node"><i class="exp minus"></i><svg class="ic"><use href="#home"/></svg><span>Home - PremiumSupportProject\台网测试</span></div>
                <div class="node n1"><i class="exp plus"></i><svg class="ic"><use href="#gdb"/></svg><span>dztw_20L.gdb</span></div>
                <div class="node n1"><i class="exp"></i><svg class="ic"><use href="#mxd"/></svg><span>china_dztw.mxd</span></div>
                <div class="node"><i class="exp minus"></i><svg class="ic"><use href="#folderconn"/></svg><span>Folder Connections</span></div>
                <div class="node n1"><i class="exp plus"></i><svg class="ic"><use href="#folderconn"/></svg><span>BJTestData</span></div>
                <div class="node n1"><i class="exp plus"></i><svg class="ic"><use href="#folderconn"/></svg><span>C:\arcgisserver</span></div>
                <div class="node n1"><i class="exp plus"></i><svg class="ic"><use href="#folderconn"/></svg><span>C:\arcgisserver\directories\arcgiscache\DivinginCaching_WorldMap\Layers</span></div>
                <div class="node n1"><i class="exp plus"></i><svg class="ic"><use href="#folderconn"/></svg><span>C:\Users\kikita\Desktop</span></div>
                <div class="node n1"><i class="exp plus"></i><svg class="ic"><use href="#folderconn"/></svg><span>C:\Users\kikita\Documents\ArcGIS\</span></div>
                <div class="node n1"><i class="exp plus"></i><svg class="ic"><use href="#folderconn"/></svg><span>D:\</span></div>
                <div class="node n1"><i class="exp plus"></i><svg class="ic"><use href="#folderconn"/></svg><span>D:\CityEngine2018workspace</span></div>
                <div class="node n1"><i class="exp plus"></i><svg class="ic"><use href="#folderconn"/></svg><span>D:\CityEngine2018workspace\BeijingDemoProj</span></div>
                <div class="node n1"><i class="exp plus"></i><svg class="ic"><use href="#folderconn"/></svg><span>D:\CityEngine2018workspace\testNew</span></div>
                <div class="node n1"><i class="exp plus"></i><svg class="ic"><use href="#folderconn"/></svg><span>D:\IncidentSupportPlus</span></div>
                <div class="node n1"><i class="exp plus"></i><svg class="ic"><use href="#folderconn"/></svg><span>D:\IncidentSupportPlus\to售后</span></div>
                <div class="node n1"><i class="exp plus"></i><svg class="ic"><use href="#folderconn"/></svg><span>D:\InterestingData</span></div>
                <div class="node n1"><i class="exp plus"></i><svg class="ic"><use href="#folderconn"/></svg><span>D:\kikitaDIY</span></div>
                <div class="node n1"><i class="exp plus"></i><svg class="ic"><use href="#folderconn"/></svg><span>D:\LearnAboutArcGIS\ArcGIS_Server\DivinginCaching</span></div>
                <div class="node n1"><i class="exp plus"></i><svg class="ic"><use href="#folderconn"/></svg><span>D:\LearnAboutArcGIS\EsriData_ReadOnly</span></div>
                <div class="node n1"><i class="exp plus"></i><svg class="ic"><use href="#folderconn"/></svg><span>D:\My_Training\What's_New_in_ArcGIS_Pro_22_?&nbsp;&nbsp;\DemoProject</span></div>
                <div class="node n1"><i class="exp plus"></i><svg class="ic"><use href="#folderconn"/></svg><span>D:\PremiumSupportProject\AliCloudIssue</span></div>
                <div class="node"><i class="exp minus"></i><svg class="ic"><use href="#toolbox"/></svg><span>Toolboxes</span></div>
                <div class="node n1"><i class="exp plus"></i><svg class="ic"><use href="#toolbox"/></svg><span>My Toolboxes</span></div>
                <div class="node n1"><i class="exp plus"></i><svg class="ic"><use href="#toolbox"/></svg><span>System Toolboxes</span></div>
                <div class="node"><i class="exp plus"></i><svg class="ic"><use href="#dbfolder"/></svg><span>Database Servers</span></div>
                <div class="node"><i class="exp plus"></i><svg class="ic"><use href="#dbfolder"/></svg><span>Database Connections</span></div>
                <div class="node"><i class="exp minus"></i><svg class="ic"><use href="#dbfolder"/></svg><span>GIS Servers</span></div>
                <div class="node n1"><i class="exp"></i><svg class="ic"><use href="#srvadd"/></svg><span>Add ArcGIS Server</span></div>
                <div class="node n1"><i class="exp"></i><svg class="ic"><use href="#srvadd"/></svg><span>Add ArcIMS Server</span></div>
                <div class="node n1"><i class="exp"></i><svg class="ic"><use href="#srvadd"/></svg><span>Add WCS Server</span></div>
                <div class="node n1"><i class="exp"></i><svg class="ic"><use href="#srvaddw"/></svg><span>Add WMS Server</span></div>
                <div class="node n1"><i class="exp"></i><svg class="ic"><use href="#srvaddw"/></svg><span>Add WMTS Server</span></div>
                <div class="node n1"><i class="exp"></i><svg class="ic"><use href="#srvbad"/></svg><span>arcgis on 120win105.esrichina.com_6080 (admin)</span></div>
                <div class="node n1"><i class="exp"></i><svg class="ic"><use href="#srvbad"/></svg><span>arcgis on 192.168.100.92_6080 (publisher)</span></div>
                <div class="node n1"><i class="exp minus"></i><svg class="ic"><use href="#srvok"/></svg><span>arcgis on kikitapc.mycloud.com_6080 (admin)</span></div>
                <div class="node n2"><i class="exp minus"></i><svg class="ic"><use href="#folder"/></svg><span>CloudStorage</span></div>
                <div class="node n3"><i class="exp"></i><svg class="ic"><use href="#raster"/></svg><span class="picked">HuaweiSource</span></div>
                <div class="node n2"><i class="exp plus"></i><svg class="ic"><use href="#folder"/></svg><span>Hosted</span></div>
                <div class="node n2"><i class="exp plus"></i><svg class="ic"><use href="#folder"/></svg><span>System</span></div>
                <div class="node n2"><i class="exp plus"></i><svg class="ic"><use href="#folder"/></svg><span>TaiWangMap</span></div>
                <div class="node n2"><i class="exp plus"></i><svg class="ic"><use href="#folder"/></svg><span>Utilities</span></div>
                <div class="node n2"><i class="exp"></i><svg class="ic"><use href="#mapsvc"/></svg><span>SampleWorldCities</span></div>
                <div class="node n2"><i class="exp plus"></i><svg class="ic"><use href="#drafts"/></svg><span>Drafts</span></div>
                <div class="node n1"><i class="exp"></i><svg class="ic"><use href="#srvbad"/></svg><span>arcgis on kikitapc.mycloud.com_6443 (publisher)</span></div>
                <div class="node n1"><i class="exp"></i><svg class="ic"><use href="#srvbad"/></svg><span>arcgis on kikitapc.mycloud.com_6443 (user)</span></div>
                <div class="node n1"><i class="exp"></i><svg class="ic"><use href="#srvweb"/></svg><span>www.hzmaps.com</span></div>
                <div class="node n1"><i class="exp"></i><svg class="ic"><use href="#srvweb"/></svg><span>在线地图服务 on t0.tianditu.com</span></div>
                <div class="node"><i class="exp"></i><svg class="ic"><use href="#cloudfolder"/></svg><span>My Hosted Services</span></div>
                <div class="node"><i class="exp"></i><svg class="ic"><use href="#cloudfolder"/></svg><span>Ready-To-Use Services</span></div>
                <div class="node"><i class="exp plus"></i><svg class="ic"><use href="#interop"/></svg><span>Interoperability Connections</span></div>
                <div class="node"><i class="exp plus"></i><svg class="ic"><use href="#cloudfolder"/></svg><span>Tracking Connections</span></div>
            </div>
            <div class="tabs">
                <div class="tab t1"><i></i></div>
                <div class="tab t2"><i></i></div>
                <div class="tab t3"><i></i></div>
                <div class="tab t4 current"><i></i></div>
                <div class="tab t5"><i></i></div>
                <div class="tab t6"><i></i></div>
            </div>
        </aside>
    </main>
</div>

<!-- red marks drawn over the screenshot -->
<svg class="annotation" viewBox="0 0 1288 741">
    <path d="M725 546L925 565" stroke="#f23a3f" stroke-width="1"/>
    <path d="M725 544.500L790 551L790 553.500L725 549z" fill="#f23a3f"/>
    <path d="M714 545.500l13-5-1 5.500 1 5z" fill="#f23a3f"/>
    <ellipse cx="972" cy="560" rx="54.500" ry="13" fill="none" stroke="#e8202a" stroke-width="2"/>
</svg>

</body>
</html>
```

FILE: styles.css
```css
* {
    box-sizing: border-box;
}
html, body {
    margin: 0;
    padding: 0;
    height: 741px;
    overflow: hidden;
}
body {
    font-family: Roboto, "Noto Sans CJK SC", sans-serif;
    font-size: 9.4px;
    letter-spacing: -.45px;
    text-rendering: geometricPrecision;
    color: #2b2b2b;
    background-color: #f5f5f5;
}
i, b {
    font-style: normal;
    display: block;
    flex: none;
}
svg {
    display: block;
    flex: none;
}
.defs {
    position: absolute;
}
.app {
    height: 741px;
    display: flex;
    flex-direction: column;
    filter: blur(.3px);
}
.ic {
    width: 11px;
    height: 11px;
}

/* title and menu */
.titlebar {
    height: 16px;
    background-color: #484745;
    color: #c8c8c8;
    display: flex;
    align-items: center;
    gap: 4px;
    padding-left: 5px;
    flex: none;
    font-size: 10px;
    letter-spacing: 0;
}
.winbtns {
    margin-left: auto;
    display: flex;
    gap: 20px;
    padding-right: 21px;
}
.menubar {
    height: 17px;
    display: flex;
    align-items: center;
    gap: 10.6px;
    padding-left: 12px;
    flex: none;
    border-top: 1px solid #aaa;
}

/* toolbars */
.toolrow {
    height: 19px;
    display: flex;
    flex: none;
}
.toolrow + .toolrow {
    height: 20px;
    border-bottom: 1px solid #a8a8a8;
}
.toolbar {
    display: flex;
    align-items: center;
    background-color: #f0f0f0;
    padding-left: 3px;
    white-space: nowrap;
}
.toolbar:first-child {
    padding-left: 6px;
}
.toolbar.standard {
    padding-right: 5px;
}
.tb {
    width: 15.7px;
    height: 15px;
    padding: 1.5px 2px;
}
.tb.active {
    background-color: #e2eefa;
    outline: 1px solid #5da3dc;
    outline-offset: -1px;
}
.sep {
    width: 1px;
    height: 13px;
    margin: 0 1.5px;
    background-color: #c4c4c4;
}
.grip {
    width: 2px;
    height: 13px;
    margin-right: 1px;
    background-image: linear-gradient(#999 50%, transparent 50%);
    background-size: 2px 3px;
}
.caret {
    width: 0;
    height: 0;
    border: 2.5px solid transparent;
    border-top: 3px solid #222;
    border-bottom: 0;
    margin: 0 1.5px;
}
.overflow {
    width: 6px;
    height: 19px;
    margin-left: 3px;
    align-self: flex-end;
    background: linear-gradient(transparent 55%, #c4c4c4 55%);
    position: relative;
}
.overflow::after {
    content: "";
    position: absolute;
    left: 1px;
    bottom: 2px;
    width: 4px;
    height: 3px;
    border-top: 1px solid #222;
    border-bottom: 2px solid #222;
}
.tbtext {
    padding: 0 3px 0 3px;
    letter-spacing: -.6px;
}
.combo {
    height: 16px;
    display: flex;
    align-items: center;
    gap: 3px;
    padding-left: 3px;
    background-color: #fff;
    border: 1px solid #9b9b9b;
    position: relative;
}
.combo.scale {
    width: 106px;
    margin-left: 3px;
}
.combo.image {
    width: 127px;
    margin-left: 1px;
    border-left: 2px solid #777;
    border-top: 2px solid #777;
    padding-left: 0;
}
.combo.fast {
    width: 47px;
    margin-right: 2px;
    background-color: #d9d9d9;
    color: #8c8c8c;
}
.chev {
    margin-left: auto;
    margin-right: 3px;
    width: 6px;
    height: 6px;
    border-right: 1px solid #666;
    border-bottom: 1px solid #666;
    transform: scaleY(.7) rotate(45deg);
}
.dropbtn {
    margin-left: auto;
    width: 11px;
    height: 13px;
    background-color: #e6e6e6;
    border-left: 1px solid #777;
    position: relative;
}
.dropbtn::after {
    content: "";
    position: absolute;
    left: 2px;
    top: 5px;
    border: 3px solid transparent;
    border-top: 4px solid #111;
    border-bottom: 0;
}

/* main area */
.workspace {
    flex: 1;
    min-height: 0;
    display: flex;
    background-color: #fff;
}
.toc {
    width: 250px;
    flex: none;
    display: flex;
    flex-direction: column;
    padding-left: 4px;
    background: linear-gradient(#464646, #464646) left bottom / 3px 41px no-repeat, #f5f5f5;
}
.panelhead {
    height: 15px;
    display: flex;
    align-items: center;
    padding: 0 3px;
    flex: none;
}
.toc-head {
    background: linear-gradient(to right, #aecae6, #b9d0e6);
    padding-left: 2px;
}
.panelbtns {
    margin-left: auto;
    display: flex;
    gap: 6px;
    padding-right: 1px;
}
.paneltools {
    height: 17px;
    display: flex;
    align-items: center;
    padding-left: 1px;
    flex: none;
}
.paneltools .tb {
    width: 16px;
}
.paneltools .sep {
    margin: 0 3px;
}
.toc-tree {
    flex: 1;
    width: 245px;
    margin-top: 1px;
    background-color: #fff;
    border: 1px solid #a3a3a3;
    border-bottom: 0;
    overflow: hidden;
    padding-top: .5px;
}
.row {
    height: 12.8px;
    display: flex;
    align-items: center;
    gap: 4px;
    padding-left: 3.5px;
    white-space: nowrap;
}
.row.d1 { padding-left: 17px; }
.row.d2 { padding-left: 30px; }
.row.d3 { padding-left: 43px; }
.row.cloud { gap: 1px; }
.row.band { gap: 2px; }
.row.band.d2 { padding-left: 40px; }
.row.band.d3 { padding-left: 67px; }
.row.band-head.d2 { padding-left: 57px; }
.row.band-head.d3 { padding-left: 83px; }
.branch {
    position: relative;
}
.branch::before {
    content: "";
    position: absolute;
    left: 47px;
    top: -1px;
    bottom: -1px;
    width: 1px;
    background-color: #b5b5b5;
}
.branch.last::before {
    bottom: 6px;
}
.branch i {
    position: relative;
}
.exp {
    width: 8px;
    height: 8px;
    position: relative;
}
.exp.plus, .exp.minus {
    background-color: #f4f4f4;
    border: 1px solid #aaa;
}
.exp.plus::before, .exp.minus::before {
    content: "";
    position: absolute;
    left: 1px;
    right: 1px;
    top: 2.5px;
    height: 1px;
    background-color: #555;
}
.exp.plus::after {
    content: "";
    position: absolute;
    top: 1px;
    bottom: 1px;
    left: 2.5px;
    width: 1px;
    background-color: #555;
}
.check {
    width: 8px;
    height: 8px;
    margin: 0 1px 0 1.5px;
    border: 1px solid #333;
    background-color: #fff;
    position: relative;
}
.row.cloud .check {
    margin-left: 4px;
}
.check.on::after {
    content: "";
    position: absolute;
    left: 1.5px;
    top: -.5px;
    width: 3px;
    height: 5px;
    border-right: 1.2px solid #111;
    border-bottom: 1.2px solid #111;
    transform: rotate(40deg);
}
.check-gap {
    width: 6.5px;
}
.swatch {
    width: 11px;
    height: 7px;
    border: 1px solid #555;
}
.swatch.red { background-color: #f00; }
.swatch.green { background-color: #0f0; }
.swatch.blue { background-color: #00f; }
.swatch.outline-pink {
    border-color: #ff66ee;
    box-shadow: inset 0 0 0 1px #ffc4f8;
}
.swatch.outline-green {
    border-color: #44ff44;
    box-shadow: inset 0 0 0 1px #ccffcc;
}
.bandname {
    min-width: 23px;
    margin-right: 1px;
}
.selected {
    background-color: #2f78c8;
    color: #fff;
    outline: 1px solid #6b4020;
    padding: 0 1px;
    margin-left: 3px;
}
.hscroll {
    height: 3px;
    width: 245px;
    background-color: #f0f0f0;
    flex: none;
    padding-left: 12px;
}
.hscroll i {
    width: 143px;
    height: 3px;
    background-color: #c2c2c2;
}
.map {
    width: 619px;
    margin-left: 3px;
    flex: none;
    background-color: #fff;
    border-left: 2px solid #8c8c8c;
    border-top: 1px solid #a3a3a3;
    padding: 136px 0 0 83px;
}
.scene {
    width: 410px;
    height: 398px;
}
.vscroll {
    width: 11px;
    flex: none;
    background-color: #c8c8c8;
    display: flex;
    flex-direction: column;
    justify-content: space-between;
}
.vscroll i {
    flex: 1;
}
.vscroll b {
    height: 13px;
    background-color: #f0f0f0;
    position: relative;
}
.vscroll b::after {
    content: "";
    position: absolute;
    left: 3px;
    width: 4px;
    height: 4px;
    border-left: 1px solid #333;
    border-top: 1px solid #333;
}
.vscroll .up::after {
    top: 5px;
    transform: rotate(45deg);
}
.vscroll .down::after {
    top: 3px;
    transform: rotate(225deg);
}
.catalog {
    flex: 1;
    min-width: 0;
    margin-left: 3px;
    display: flex;
    flex-direction: column;
    background-color: #f5f5f5;
}
.cat-head {
    background: linear-gradient(to right, #c3d5e6, #d3e0ec);
}
.cat-tools {
    padding-left: 3px;
}
.cat-tools .fwd {
    margin-right: 2px;
}
.location {
    height: 17px;
    display: flex;
    align-items: center;
    gap: 5px;
    padding-left: 2px;
    flex: none;
}
.locbox {
    flex: 1;
    height: 16px;
    display: flex;
    align-items: center;
    gap: 3px;
    padding-left: 2px;
    background-color: #fff;
    border: 1px solid #a3a3a3;
    border-right: 0;
}
.cat-tree {
    flex: 1;
    min-height: 0;
    overflow: hidden;
    background-color: #fff;
    border-left: 1px solid #9b9b9b;
    border-top: 1px solid #a3a3a3;
    padding-top: .5px;
}
.node {
    height: 12.09px;
    display: flex;
    align-items: center;
    gap: 3px;
    padding-left: 4px;
    white-space: nowrap;
}
.node .exp {
    margin-right: 2px;
}
.node.n1 { padding-left: 18px; }
.node.n2 { padding-left: 31px; }
.node.n3 { padding-left: 44px; }
.picked {
    background-color: #f0f0f0;
    padding: 0 1px;
}
.tabs {
    height: 6px;
    display: flex;
    padding-left: 3px;
    flex: none;
    background-color: #f0f0f0;
    border-top: 1px solid #bbb;
    overflow: hidden;
}
.tab {
    padding: 1px 0 0 3px;
    border-right: 1px solid #999;
}
.tab i {
    width: 11px;
    height: 8px;
    background-color: #dfe9f3;
    border: 1px solid #24466e;
}
.t1 { width: 45px; }
.t2 { width: 63px; }
.t3 { width: 76px; }
.t4 { width: 48px; }
.t5 { width: 41px; }
.t6 { width: 78px; }
.tab.current {
    background-color: #fff;
}
.annotation {
    position: absolute;
    left: 0;
    top: 0;
    width: 1288px;
    height: 741px;
    pointer-events: none;
    filter: blur(.3px);
}
```
